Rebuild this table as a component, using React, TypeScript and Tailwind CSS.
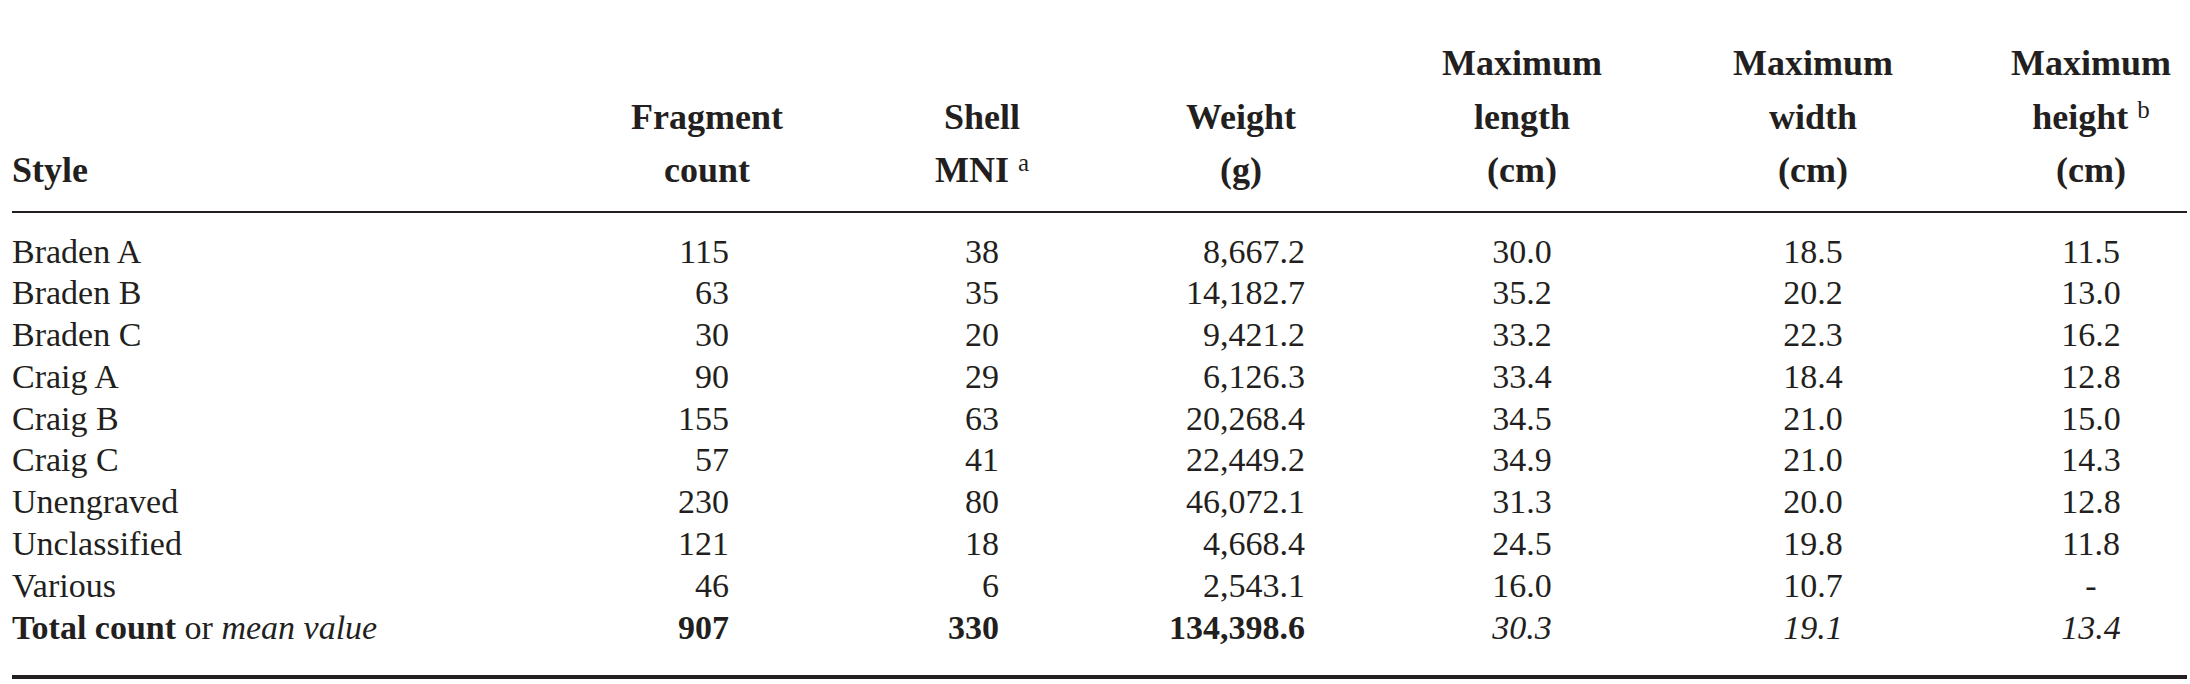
import type { ReactNode } from 'react';

type Row = readonly [string, string, string, string, string, string, string];

const ROWS: readonly Row[] = [
  ['Braden A', '115', '38', '8,667.2', '30.0', '18.5', '11.5'],
  ['Braden B', '63', '35', '14,182.7', '35.2', '20.2', '13.0'],
  ['Braden C', '30', '20', '9,421.2', '33.2', '22.3', '16.2'],
  ['Craig A', '90', '29', '6,126.3', '33.4', '18.4', '12.8'],
  ['Craig B', '155', '63', '20,268.4', '34.5', '21.0', '15.0'],
  ['Craig C', '57', '41', '22,449.2', '34.9', '21.0', '14.3'],
  ['Unengraved', '230', '80', '46,072.1', '31.3', '20.0', '12.8'],
  ['Unclassified', '121', '18', '4,668.4', '24.5', '19.8', '11.8'],
  ['Various', '46', '6', '2,543.1', '16.0', '10.7', '-'],
];

const TOTAL = { fragments: '907', mni: '330', weight: '134,398.6', length: '30.3', width: '19.1', height: '13.4' };

// per-column alignment for body cells: counts are right aligned under a centred header
const CELL = [
  'text-left',
  'text-right pr-[105px]',
  'text-right pr-[131px]',
  'text-right pr-[47px]',
  'text-center',
  'text-center',
  'text-center pl-[61px]',
] as const;

function Sup({ children }: { children: ReactNode }) {
  return <span className="align-[11px] text-[25px] font-normal leading-[0]">{children}</span>;
}

function Head({ lines, className }: { lines: ReactNode[]; className?: string }) {
  return (
    <th className={`align-bottom pb-[13px] font-bold ${className ?? 'text-center'}`}>
      {lines.map((line, i) => (
        <span key={i} className="block">
          {line}
        </span>
      ))}
    </th>
  );
}

export default function App() {
  const bodyRows = ROWS.length + 1;

  const pad = (i: number) =>
    i === 0 ? 'pt-[18px]' : i === bodyRows - 1 ? 'pb-[27px]' : '';

  return (
    <div
      className="h-[684px] w-[2190px] bg-white pl-[12px] pr-[3px] pt-[37px] text-[#231f20]"
      style={{ fontFamily: '"Liberation Serif", "Times New Roman", serif' }}
    >
      <div className="w-[2175px] border-b-4 border-[#231f20]">
        <table className="w-[2175px] table-fixed border-collapse">
          <colgroup>
            <col className="w-[568px]" />
            <col className="w-[254px]" />
            <col className="w-[296px]" />
            <col className="w-[222px]" />
            <col className="w-[340px]" />
            <col className="w-[242px]" />
            <col className="w-[253px]" />
          </colgroup>
          <thead>
            <tr className="border-b-2 border-[#231f20] text-[36px] leading-[53.5px]">
              <Head lines={['Style']} className="text-left" />
              <Head lines={['Fragment', 'count']} />
              <Head
                lines={[
                  'Shell',
                  <>
                    MNI <Sup>a</Sup>
                  </>,
                ]}
              />
              <Head lines={['Weight', '(g)']} />
              <Head lines={['Maximum', 'length', '(cm)']} />
              <Head lines={['Maximum', 'width', '(cm)']} />
              <Head
                className="text-center pl-[61px]"
                lines={[
                  'Maximum',
                  <>
                    height <Sup>b</Sup>
                  </>,
                  '(cm)',
                ]}
              />
            </tr>
          </thead>
          <tbody className="text-[34px] leading-[41.8px]">
            {ROWS.map((row, i) => (
              <tr key={row[0]}>
                {row.map((value, c) => (
                  <td key={c} className={`p-0 whitespace-nowrap ${CELL[c]} ${pad(i)}`}>
                    {value}
                  </td>
                ))}
              </tr>
            ))}
            <tr>
              <td className={`p-0 whitespace-nowrap ${CELL[0]} ${pad(bodyRows - 1)}`}>
                <span className="font-bold">Total count</span> or <span className="italic">mean value</span>
              </td>
              <td className={`p-0 font-bold ${CELL[1]} ${pad(bodyRows - 1)}`}>{TOTAL.fragments}</td>
              <td className={`p-0 font-bold ${CELL[2]} ${pad(bodyRows - 1)}`}>{TOTAL.mni}</td>
              <td className={`p-0 font-bold ${CELL[3]} ${pad(bodyRows - 1)}`}>{TOTAL.weight}</td>
              <td className={`p-0 italic ${CELL[4]} ${pad(bodyRows - 1)}`}>{TOTAL.length}</td>
              <td className={`p-0 italic ${CELL[5]} ${pad(bodyRows - 1)}`}>{TOTAL.width}</td>
              <td className={`p-0 italic ${CELL[6]} ${pad(bodyRows - 1)}`}>{TOTAL.height}</td>
            </tr>
          </tbody>
        </table>
      </div>
    </div>
  );
}
